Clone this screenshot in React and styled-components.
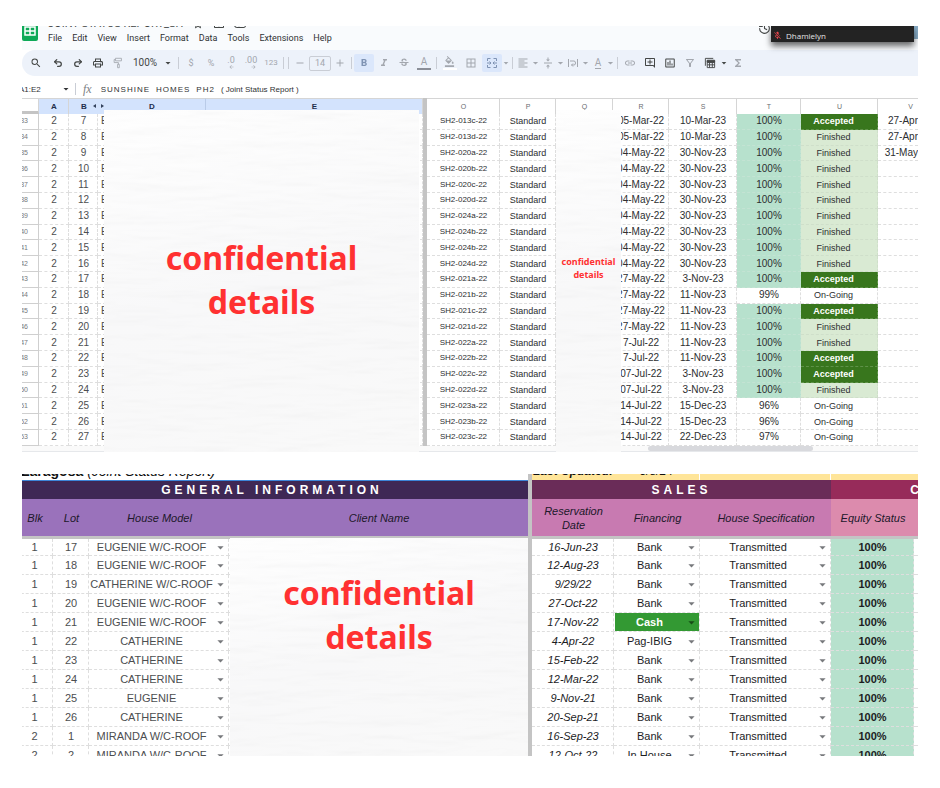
import React from 'react';
import styled, { createGlobalStyle, css } from 'styled-components';
import { Undo2, Redo2, History } from 'lucide-react';
import {
    MdSearch, MdOutlinePrint, MdFormatBold, MdFormatItalic, MdStrikethroughS,
    MdFormatColorFill, MdBorderAll, MdFormatAlignLeft, MdVerticalAlignCenter, MdLink,
    MdOutlineAddComment, MdInsertChartOutlined, MdOutlineFilterAlt, MdFunctions, MdArrowDropDown,
    MdRemove, MdAdd, MdMicOff, MdStarBorder, MdOutlineDriveFileMove, MdOutlineCloudDone,
    MdArrowBack, MdArrowForward,
} from 'react-icons/md';

const menus = ['File', 'Edit', 'View', 'Insert', 'Format', 'Data', 'Tools', 'Extensions', 'Help'];

const units = [
    ['33', '7', 'SH2-013c-22', '05-Mar-22', '10-Mar-23', '100%', 'Accepted', '27-Apr'],
    ['34', '8', 'SH2-013d-22', '05-Mar-22', '10-Mar-23', '100%', 'Finished', '27-Apr'],
    ['35', '9', 'SH2-020a-22', '04-May-22', '30-Nov-23', '100%', 'Finished', '31-May'],
    ['36', '10', 'SH2-020b-22', '04-May-22', '30-Nov-23', '100%', 'Finished', ''],
    ['37', '11', 'SH2-020c-22', '04-May-22', '30-Nov-23', '100%', 'Finished', ''],
    ['38', '12', 'SH2-020d-22', '04-May-22', '30-Nov-23', '100%', 'Finished', ''],
    ['39', '13', 'SH2-024a-22', '04-May-22', '30-Nov-23', '100%', 'Finished', ''],
    ['40', '14', 'SH2-024b-22', '04-May-22', '30-Nov-23', '100%', 'Finished', ''],
    ['41', '15', 'SH2-024b-22', '04-May-22', '30-Nov-23', '100%', 'Finished', ''],
    ['42', '16', 'SH2-024d-22', '04-May-22', '30-Nov-23', '100%', 'Finished', ''],
    ['43', '17', 'SH2-021a-22', '27-May-22', '3-Nov-23', '100%', 'Accepted', ''],
    ['44', '18', 'SH2-021b-22', '27-May-22', '11-Nov-23', '99%', 'On-Going', ''],
    ['45', '19', 'SH2-021c-22', '27-May-22', '11-Nov-23', '100%', 'Accepted', ''],
    ['46', '20', 'SH2-021d-22', '27-May-22', '11-Nov-23', '100%', 'Finished', ''],
    ['47', '21', 'SH2-022a-22', '7-Jul-22', '11-Nov-23', '100%', 'Finished', ''],
    ['48', '22', 'SH2-022b-22', '7-Jul-22', '11-Nov-23', '100%', 'Accepted', ''],
    ['49', '23', 'SH2-022c-22', '07-Jul-22', '3-Nov-23', '100%', 'Accepted', ''],
    ['50', '24', 'SH2-022d-22', '07-Jul-22', '3-Nov-23', '100%', 'Finished', ''],
    ['51', '25', 'SH2-023a-22', '14-Jul-22', '15-Dec-23', '96%', 'On-Going', ''],
    ['52', '26', 'SH2-023b-22', '14-Jul-22', '15-Dec-23', '96%', 'On-Going', ''],
    ['53', '27', 'SH2-023c-22', '14-Jul-22', '22-Dec-23', '97%', 'On-Going', ''],
];

const clients = [
    ['1', '17', 'EUGENIE W/C-ROOF', '16-Jun-23', 'Bank'],
    ['1', '18', 'EUGENIE W/C-ROOF', '12-Aug-23', 'Bank'],
    ['1', '19', 'CATHERINE W/C-ROOF', '9/29/22', 'Bank'],
    ['1', '20', 'EUGENIE W/C-ROOF', '27-Oct-22', 'Bank'],
    ['1', '21', 'EUGENIE W/C-ROOF', '17-Nov-22', 'Cash'],
    ['1', '22', 'CATHERINE', '4-Apr-22', 'Pag-IBIG'],
    ['1', '23', 'CATHERINE', '15-Feb-22', 'Bank'],
    ['1', '24', 'CATHERINE', '12-Mar-22', 'Bank'],
    ['1', '25', 'EUGENIE', '9-Nov-21', 'Bank'],
    ['1', '26', 'CATHERINE', '20-Sep-21', 'Bank'],
    ['2', '1', 'MIRANDA W/C-ROOF', '16-Sep-23', 'Bank'],
    ['2', '2', 'MIRANDA W/C-ROOF', '12-Oct-22', 'In House'],
];

const MergeIcon = () => (
    <svg width="12" height="12" viewBox="0 0 24 24" fill="none" stroke="currentColor" strokeWidth="2">
        <path d="M9 3H3v5M15 3h6v5M9 21H3v-5M15 21h6v-5M2 12h7M7 9l3 3-3 3M22 12h-7M17 9l-3 3 3 3" />
    </svg>
);

const WrapIcon = () => (
    <svg width="12" height="12" viewBox="0 0 24 24" fill="none" stroke="currentColor" strokeWidth="2">
        <path d="M3 4v16M21 4v16M6 8h8a3 4 0 0 1 0 8h-5M12 13l-3 3 3 3" />
    </svg>
);

const RollerIcon = () => (
    <svg width="12" height="14" viewBox="0 0 24 28" fill="none" stroke="currentColor" strokeWidth="2">
        <path d="M6 3h14v6H6zM6 6H3v7h10v4M11 17h4v8h-4z" />
    </svg>
);

const ViewsIcon = () => (
    <svg width="13" height="13" viewBox="0 0 26 26" fill="none" stroke="currentColor" strokeWidth="2">
        <path d="M3 19V3h17M7 7h16v16H7zM7 12h16M7 17h16M12 12v11M18 12v11" />
        <path d="M7 8h16v3H7z" fill="currentColor" />
    </svg>
);

const Paper = ({ seed, children, ...rest }) => (
    <PaperSheet {...rest}>
        <svg aria-hidden="true" width="100%" height="100%">
            <filter id={`grain${seed}`} x="0" y="0" width="100%" height="100%">
                <feTurbulence type="fractalNoise" baseFrequency="0.012 0.07" numOctaves="3" seed={seed} />
                <feDiffuseLighting lightingColor="#ffffff" surfaceScale="2" diffuseConstant="1">
                    <feDistantLight azimuth="250" elevation="70" />
                </feDiffuseLighting>
            </filter>
            <rect width="100%" height="100%" filter={`url(#grain${seed})`} opacity="0.16" />
        </svg>
        {children}
    </PaperSheet>
);

const CellSelect = ({ label, value, solid }) => (
    <SelectWrap $solid={solid}>
        <select aria-label={label} defaultValue={value}>
            <option>{value}</option>
        </select>
        <MdArrowDropDown />
    </SelectWrap>
);

const StatusSheet = () => (
    <Sheet>
        <AppHeader>
            <Logo viewBox="0 0 16 20">
                <path d="M0 0h16v18a2 2 0 0 1-2 2H2a2 2 0 0 1-2-2z" fill="#0fa958" />
                <path d="M3 6h10v8H3zM3 10h10M8 6v8" fill="none" stroke="#fff" strokeWidth="1.5" />
            </Logo>
            <div>
                <TitleRow>
                    JOINT STATUS REPORT_SH
                    <MdStarBorder />
                    <MdOutlineDriveFileMove />
                    <MdOutlineCloudDone />
                </TitleRow>
                <MenuBar>
                    {menus.map(menu => <button key={menu}>{menu}</button>)}
                </MenuBar>
            </div>
            <HistoryMark size={13} strokeWidth={2} />
        </AppHeader>
        <CallTile>
            <MdMicOff />
            <span>Dhamielyn</span>
        </CallTile>

        <Toolbar>
            <Tool $dark aria-label="Search"><MdSearch /></Tool>
            <Gap />
            <Tool $dark aria-label="Undo"><Undo2 strokeWidth={3} /></Tool>
            <Tool $dark aria-label="Redo"><Redo2 strokeWidth={3} /></Tool>
            <Tool $dark aria-label="Print"><MdOutlinePrint /></Tool>
            <Tool aria-label="Paint format"><RollerIcon /></Tool>
            <ZoomWrap>
                <select aria-label="Zoom" defaultValue="100%"><option>100%</option></select>
                <MdArrowDropDown />
            </ZoomWrap>
            <Divider />
            <Tool>$</Tool>
            <Tool>%</Tool>
            <Tool><Decimal>.0<MdArrowBack /></Decimal></Tool>
            <Tool><Decimal>.00<MdArrowForward /></Decimal></Tool>
            <Tool $small>123</Tool>
            <Divider />
            <Divider />
            <Tool $w={18} aria-label="Smaller"><MdRemove /></Tool>
            <SizeInput aria-label="Font size" defaultValue="14" />
            <Tool $w={18} aria-label="Larger"><MdAdd /></Tool>
            <Divider />
            <Tool $on aria-label="Bold"><MdFormatBold /></Tool>
            <Tool aria-label="Italic"><MdFormatItalic /></Tool>
            <Tool aria-label="Strikethrough"><MdStrikethroughS /></Tool>
            <Tool><Underbar $color="#8b8f98">A</Underbar></Tool>
            <Divider />
            <Tool $w={21} aria-label="Fill color"><Underbar $color="#fff"><MdFormatColorFill /></Underbar></Tool>
            <Tool $w={22} aria-label="Borders"><MdBorderAll /></Tool>
            <Tool $on aria-label="Merge cells"><MergeIcon /></Tool>
            <Caret $w={8} />
            <Divider />
            <Tool $w={16} aria-label="Horizontal align"><MdFormatAlignLeft /></Tool>
            <Caret $w={9} />
            <Tool $w={16} aria-label="Vertical align"><MdVerticalAlignCenter /></Tool>
            <Caret $w={9} />
            <Tool $w={16} aria-label="Text wrapping"><WrapIcon /></Tool>
            <Caret $w={9} />
            <Tool $w={16}><Rotated>A</Rotated></Tool>
            <Caret $w={9} />
            <Divider />
            <Tool aria-label="Link"><MdLink /></Tool>
            <Tool $dark aria-label="Comment"><MdOutlineAddComment /></Tool>
            <Tool $dark aria-label="Chart"><MdInsertChartOutlined /></Tool>
            <Tool aria-label="Filter"><MdOutlineFilterAlt /></Tool>
            <Tool $dark aria-label="Filter views"><ViewsIcon /></Tool>
            <Caret $w={8} $dark />
            <Tool aria-label="Functions"><MdFunctions /></Tool>
        </Toolbar>

        <FormulaBar>
            <NameBox aria-label="Name box" defaultValue="A1:E2" />
            <MdArrowDropDown />
            <Divider />
            <em>fx</em>
            <Formula role="textbox" aria-label="Formula">
                <b>SUNSHINE</b><b>HOMES</b><b>PH2</b><span>( Joint Status Report )</span>
            </Formula>
        </FormulaBar>

        <StatusTable>
            <colgroup>
                <col width="25" /><col width="30" /><col width="29" /><col width="108" /><col />
                <col width="4" /><col width="73" /><col width="56" /><col width="57" /><col width="56" />
                <col width="68" /><col width="64" /><col width="77" /><col width="40" />
            </colgroup>
            <thead>
                <tr>
                    <ColHead $corner />
                    <ColHead $on>A</ColHead>
                    <ColHead $on $arrow="left">B</ColHead>
                    <ColHead $on $arrow="right">D</ColHead>
                    <ColHead $on>E</ColHead>
                    <Freeze as="th" />
                    {['O', 'P', 'Q', 'R', 'S', 'T', 'U'].map(name => <ColHead key={name}>{name}</ColHead>)}
                    <ColHead $end>V</ColHead>
                </tr>
            </thead>
            <tbody>
                {units.map(([row, lot, code, start, end, percent, status, turnover]) => (
                    <tr key={row}>
                        <RowHead>{row}</RowHead>
                        <Cell $gray>2</Cell>
                        <Cell $gray>{lot}</Cell>
                        <Cell $gray $left>E</Cell>
                        <Cell />
                        <Freeze />
                        <Cell $size={8}>{code}</Cell>
                        <Cell $size={9}>Standard</Cell>
                        <Cell />
                        <Cell>{start}</Cell>
                        <Cell>{end}</Cell>
                        <Cell $done={percent === '100%'}>{percent}</Cell>
                        <StatusCell $status={status}>{status}</StatusCell>
                        <Cell $right>{turnover}</Cell>
                    </tr>
                ))}
            </tbody>
        </StatusTable>
        <ScrollTrack><div /></ScrollTrack>

        <ClientPaper seed={3}><Notice>confidential<br />details</Notice></ClientPaper>
        <PricePaper seed={8}><Notice $small>confidential<br />details</Notice></PricePaper>
    </Sheet>
);

const ClientSheet = () => (
    <Sheet $clip>
        <ClientTable>
            <colgroup>
                <col width="37" /><col width="36" /><col width="140" /><col /><col width="4" />
                <col width="82" /><col width="86" /><col width="131" /><col width="83" /><col width="5" />
            </colgroup>
            <thead>
                <tr>
                    <ReportName colSpan="4"><b>Zaragosa</b> (Joint Status Report)</ReportName>
                    <Freeze as="th" />
                    <Updated><b>Last Updated:</b></Updated>
                    <Updated $line>5/8/24</Updated>
                    <Updated $line />
                    <Updated colSpan="2" />
                </tr>
                <tr>
                    <Band colSpan="4" $bg="#3f2855" $selected>GENERAL INFORMATION</Band>
                    <Freeze as="th" />
                    <Band colSpan="3" $bg="#6a2c58">SALES</Band>
                    <Band colSpan="2" $bg="#972b5a" $end>C</Band>
                </tr>
                <tr>
                    <Heading $bg="#9a72bb">Blk</Heading>
                    <Heading $bg="#9a72bb">Lot</Heading>
                    <Heading $bg="#9a72bb">House Model</Heading>
                    <Heading $bg="#9a72bb">Client Name</Heading>
                    <Freeze as="th" />
                    <Heading $bg="#c87ab1">Reservation Date</Heading>
                    <Heading $bg="#c87ab1">Financing</Heading>
                    <Heading $bg="#c87ab1">House Specification</Heading>
                    <Heading $bg="#dc8bad">Equity Status</Heading>
                    <Heading $bg="#dc8bad" />
                </tr>
            </thead>
            <tbody>
                {clients.map(([blk, lot, model, date, financing], i) => (
                    <tr key={i}>
                        <BigCell>{blk}</BigCell>
                        <BigCell>{lot}</BigCell>
                        <BigCell><CellSelect label="House model" value={model} /></BigCell>
                        <BigCell />
                        <Freeze />
                        <BigCell $dark><i>{date}</i></BigCell>
                        <BigCell $dark><CellSelect label="Financing" value={financing} solid={financing === 'Cash'} /></BigCell>
                        <BigCell $dark><CellSelect label="House specification" value="Transmitted" /></BigCell>
                        <BigCell $dark $done><b>100%</b></BigCell>
                        <BigCell />
                    </tr>
                ))}
            </tbody>
        </ClientTable>
        <NamePaper seed={5}><Notice $top>confidential<br />details</Notice></NamePaper>
    </Sheet>
);

const App = () => (
    <Page>
        <GlobalStyle />
        <StatusSheet />
        <ClientSheet />
    </Page>
);

const GlobalStyle = createGlobalStyle`
    * {
        box-sizing: border-box;
    }

    body {
        margin: 0;
        background: #fff;
        font-family: 'Liberation Sans', Arial, sans-serif;
    }

    button, input, select {
        margin: 0;
        padding: 0;
        border: 0;
        background: none;
        color: inherit;
        font: inherit;
        appearance: none;
        outline: none;
    }
`;

const Page = styled.main`
    display: flex;
    flex-direction: column;
    gap: 22px;
    padding: 26px 22px 32px;
`;

const Sheet = styled.section`
    position: relative;
    overflow: hidden;
    ${({ $clip }) => $clip && css`max-height: 282px;`}
`;

const AppHeader = styled.header`
    display: flex;
    gap: 10px;
    height: 24px;
    background: #f9fbfd;
`;

const Logo = styled.svg`
    width: 16px;
    height: 20px;
    margin-top: -5px;
`;

const TitleRow = styled.div`
    display: flex;
    align-items: center;
    gap: 9px;
    height: 14px;
    margin: -9px 0 -1px;
    color: #444746;
    font: 11px/14px Roboto, sans-serif;

    svg {
        width: 12px;
        height: 12px;
    }
`;

const MenuBar = styled.nav`
    display: flex;
    gap: 10px;
    height: 16px;
    color: #303234;
    font: 9px/16px Roboto, sans-serif;
`;

const HistoryMark = styled(History)`
    position: absolute;
    top: -4px;
    right: 147px;
    color: #444746;
`;

const CallTile = styled.div`
    position: absolute;
    top: 0;
    right: 4px;
    display: flex;
    align-items: center;
    gap: 4px;
    width: 143px;
    height: 16px;
    padding: 3px 0 0 2px;
    background: #232323;
    box-shadow: 0 4px 6px rgba(0, 0, 0, 0.6), 4px -3px 0 #86aac4;
    color: #e4e4e4;
    font: 8px/12px 'Open Sans', sans-serif;

    svg {
        width: 9px;
        height: 9px;
        color: #f0474e;
    }
`;

const Toolbar = styled.div`
    display: flex;
    align-items: center;
    height: 26px;
    padding-left: 4px;
    border-radius: 13px 0 0 13px;
    background: #edf2fa;
`;

const Tool = styled.button`
    display: flex;
    flex: none;
    align-items: center;
    justify-content: center;
    width: ${({ $w = 20 }) => $w}px;
    height: 18px;
    border-radius: 2px;
    background: ${({ $on }) => ($on ? '#dbe7fb' : 'none')};
    color: ${({ $dark, $on }) => ($dark ? '#444746' : $on ? '#7f93b3' : '#a3a7ae')};
    font: ${({ $small }) => ($small ? 8 : 9)}px/12px Roboto, sans-serif;

    > svg {
        flex: none;
        width: 12px;
        height: 12px;
    }

    > .lucide {
        width: 10px;
        height: 10px;
    }
`;

const Gap = styled.span`
    width: 2px;
`;

const Divider = styled.span`
    flex: none;
    width: 1px;
    height: 12px;
    margin: 0 2px;
    background: #c9cdd5;
`;

const ZoomWrap = styled.label`
    display: flex;
    align-items: center;
    width: 48px;
    padding-left: 5px;
    color: #444746;
    font: 10px/14px Roboto, sans-serif;

    select {
        width: 29px;
    }

    svg {
        width: 12px;
        height: 12px;
    }
`;

const Decimal = styled.span`
    display: flex;
    flex-direction: column;
    align-items: flex-end;
    line-height: 8px;

    svg {
        width: 7px;
        height: 6px;
    }
`;

const SizeInput = styled.input`
    width: 22px;
    height: 15px;
    border: 1px solid #c9cdd5;
    border-radius: 2px;
    color: #a3a7ae;
    font: 9px/12px Roboto, sans-serif;
    text-align: center;
`;

const Underbar = styled.span`
    width: 14px;
    height: 14px;
    border-bottom: 2px solid ${({ $color }) => $color};
    font-size: 10px;
    text-align: center;

    svg {
        width: 11px;
        height: 11px;
    }
`;

const Rotated = styled.span`
    border-bottom: 1px solid currentColor;
    font-size: 10px;
    line-height: 10px;
`;

const Caret = styled(MdArrowDropDown)`
    flex: none;
    width: ${({ $w }) => $w}px;
    height: 12px;
    color: ${({ $dark }) => ($dark ? '#444746' : '#a3a7ae')};
    transform: scale(1.4);
`;

const FormulaBar = styled.div`
    display: flex;
    align-items: center;
    height: 22px;
    margin-left: -3px;
    padding-top: 4px;
    color: #303234;
    font-size: 8px;

    > svg {
        width: 12px;
        height: 12px;
        margin-right: 1px;
    }

    em {
        margin: 0 9px 0 5px;
        color: #7b7e83;
        font: italic 12px/12px 'Liberation Serif', serif;
    }
`;

const NameBox = styled.input`
    width: 41px;
    font-size: 8px;
`;

const Formula = styled.div`
    display: flex;
    gap: 6px;

    b {
        font-weight: 400;
        letter-spacing: 1px;
    }
`;

const StatusTable = styled.table`
    width: calc(100% + 8px);
    height: 348px;
    margin-left: -8px;
    border-spacing: 0;
    table-layout: fixed;
`;

const ColHead = styled.th`
    position: relative;
    height: 16px;
    padding: 0 0 0 1px;
    border: 1px solid #d5d5d5;
    border-width: 1px 1px 0 0;
    background: ${({ $on }) => ($on ? '#d3e3fd' : '#fff')};
    color: ${({ $on }) => ($on ? '#1f2f4c' : '#6a6d71')};
    font-size: ${({ $on }) => ($on ? 8 : 7)}px;
    font-weight: ${({ $on }) => ($on ? 700 : 400)};
    line-height: 12px;

    ${({ $corner }) => $corner && css`border-bottom: 3px solid #c4c4c4;`}
    ${({ $end }) => $end && css`
        padding-right: 5px;
        border-right: 0;
        text-align: right;
    `}
    ${({ $arrow }) => $arrow && css`
        border-right: ${$arrow === 'left' ? 0 : '1px solid #b9cbe8'};

        &::after {
            content: '';
            position: absolute;
            top: 5px;
            ${$arrow === 'left' ? 'right: 2px' : 'left: 3px'};
            border: 2px solid transparent;
            border-${$arrow === 'left' ? 'right' : 'left'}: 3px solid #33415c;
        }
    `}
`;

const RowHead = styled.th`
    padding: 0 10px 0 0;
    border: solid #cfcfcf;
    border-width: 0 1px 1px 0;
    color: #77797c;
    font-size: 7px;
    font-weight: 400;
    line-height: 12px;
    text-align: right;
`;

const Cell = styled.td`
    overflow: hidden;
    padding: 0 0 0 1px;
    border: dashed #dedede;
    border-width: 0 1px 1px 0;
    background: ${({ $done }) => ($done ? '#b7e1cd' : 'none')};
    color: ${({ $gray }) => ($gray ? '#4c4e50' : '#2c2e30')};
    font-size: ${({ $size = 10 }) => $size}px;
    line-height: 12px;
    text-align: center;
    white-space: nowrap;

    ${({ $left }) => $left && css`
        padding-left: 3px;
        text-align: left;
    `}
    ${({ $right }) => $right && css`
        border-right: 0;
        text-align: right;
    `}
    ${({ $done }) => $done && css`border-color: #c3e3d3;`}
`;

const statusStyles = {
    Accepted: css`
        border-color: #5f9249;
        background: #38761d;
        color: #fff;
        font-size: 9px;
        font-weight: 700;
    `,
    Finished: css`
        border-color: #cfdfca;
        background: #d9ead3;
    `,
};

const StatusCell = styled(Cell)`
    padding-right: 12px;
    font-size: 9px;
    ${({ $status }) => statusStyles[$status]}
`;

const Freeze = styled.td`
    padding: 0;
    background: #c4c4c4;
`;

const ScrollTrack = styled.div`
    display: flex;
    justify-content: flex-end;
    height: 6px;
    padding-right: 105px;
    border-bottom: 1px solid #e6e8eb;
    background: #fafafa;

    div {
        width: 165px;
        height: 5px;
        border-radius: 3px;
        background: #d8d9dd;
    }
`;

const PaperSheet = styled.div`
    position: absolute;
    display: flex;
    justify-content: center;
    background: linear-gradient(165deg, #fff, #f8f8f9 50%, #f9f9f9);

    > svg {
        position: absolute;
        inset: 0;
    }
`;

const ClientPaper = styled(Paper)`
    top: 84px;
    right: 499px;
    bottom: 0;
    left: 82px;
`;

const PricePaper = styled(Paper)`
    top: 84px;
    right: 297px;
    bottom: 0;
    width: 65px;
`;

const NamePaper = styled(Paper)`
    top: 64px;
    right: 390px;
    bottom: 0;
    left: 208px;
`;

const Notice = styled.h2`
    position: relative;
    margin: ${({ $top, $small }) => ($small ? 145 : $top ? 33 : 126)}px 0 0;
    color: #ff3131;
    font: 700 ${({ $small }) => ($small ? '9px/13px' : '32px/44px')} 'Noto Sans', sans-serif;
    text-align: center;
`;

const ClientTable = styled.table`
    width: calc(100% + 7px);
    margin: -12px 0 0 -6px;
    border-spacing: 0;
    table-layout: fixed;

    tbody tr:first-child td {
        height: 17px;
    }
`;

const ReportName = styled.th`
    height: 18px;
    padding: 0 0 0 5px;
    color: #111;
    font-size: 14px;
    font-style: italic;
    font-weight: 400;
    line-height: 17px;
    text-align: left;

    b {
        font-style: normal;
    }
`;

const Updated = styled.th`
    padding: 0;
    border-right: ${({ $line }) => ($line ? '1px solid #fff' : 0)};
    background: #ffe599;
    color: #111;
    font-size: 12px;
    font-style: italic;
    font-weight: 400;
    line-height: 17px;
    vertical-align: bottom;
    white-space: nowrap;
`;

const Band = styled.th`
    height: 19px;
    padding: 0;
    border-top: 1px solid ${({ $selected, $bg }) => ($selected ? '#3d85d8' : $bg)};
    background: ${({ $bg }) => $bg};
    color: #fff;
    font-size: 12px;
    letter-spacing: 4px;
    line-height: 18px;
    text-align: ${({ $end }) => ($end ? 'right' : 'center')};
    white-space: nowrap;
    ${({ $end }) => $end && css`letter-spacing: normal;`}
`;

const Heading = styled.th`
    height: 40px;
    padding: 0 0 0 1px;
    border-bottom: 3px solid #c4c4c4;
    background: ${({ $bg }) => $bg};
    color: #20182a;
    font-size: 11px;
    font-style: italic;
    font-weight: 400;
    line-height: 14px;
`;

const BigCell = styled.td`
    height: 19px;
    padding: 0 0 0 1px;
    border: dashed #dedede;
    border-width: 0 1px 1px 0;
    background: ${({ $done }) => ($done ? '#b7e1cd' : 'none')};
    color: ${({ $dark }) => ($dark ? '#1c1d1f' : '#4c4e50')};
    font-size: 11px;
    line-height: 14px;
    text-align: center;
    white-space: nowrap;
`;

const SelectWrap = styled.span`
    display: flex;
    align-items: center;
    height: 100%;
    ${({ $solid }) => $solid && css`
        min-height: 18px;
        background: #339933;
        color: #fff;
        font-weight: 700;
    `}

    select {
        flex: 1;
        min-width: 0;
        height: 14px;
        text-align: center;
        text-align-last: center;
    }

    svg {
        flex: none;
        width: 15px;
        height: 15px;
        color: ${({ $solid }) => ($solid ? '#174d17' : '#77797c')};
    }
`;

export default App;
